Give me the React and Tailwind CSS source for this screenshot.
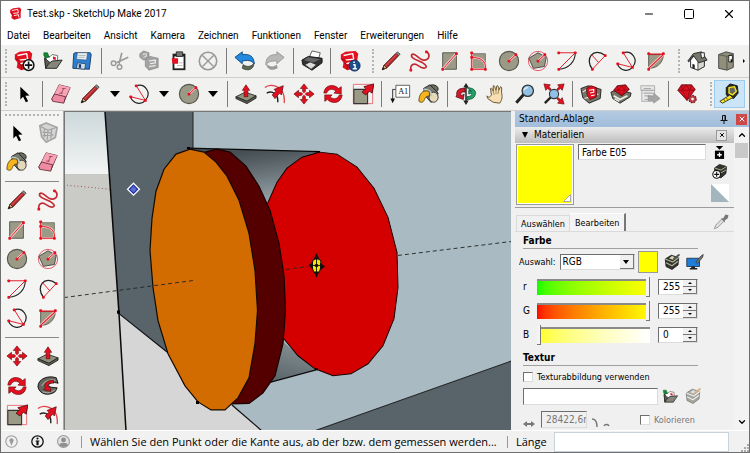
import React, { useState } from 'react';
import { Minus, Square, X, ChevronUp, ChevronDown } from 'lucide-react';
import clsx from 'clsx';

const RED = '#e3101f';
const OLIVE = '#9a9a86';

const Svg = ({ children, className = 'w-[22px] h-[22px]' }) => (
  <svg viewBox="0 0 24 24" className={clsx('shrink-0', className)} fill="none" strokeLinejoin="round">
    {children}
  </svg>
);

const Dots = ({ points }) =>
  points.map(([x, y]) => <rect key={`${x}-${y}`} x={x - 1.5} y={y - 1.5} width="3" height="3" rx="1" fill={RED} />);

/* ---------- file icons ---------- */

const LogoShape = () => (
  <>
    <path d="M2 5 L7 2 L18 1 L21 4 L20 10 L20 19 L9 22 L4 19 L5 14 L2 10 Z" fill={RED} />
    <path d="M5 6 L15 4 L16 10 L7 11 M8 15 L16 13 L17 18" stroke="#fff" strokeWidth="1.500" />
    <path d="M5 14 L9 16 V21 M3 10 L8 12" stroke="#8f0a14" strokeWidth="1" />
  </>
);

const NewIcon = () => (
  <Svg>
    <LogoShape />
    <circle cx="17" cy="16.500" r="5.800" fill="#fff" stroke="#111" strokeWidth="1.600" />
    <path d="M13 16.500h8M17 12.500v8" stroke="#111" strokeWidth="1.800" />
  </Svg>
);

const OpenIcon = ({ className }) => (
  <Svg className={className}>
    <path d="M4 8 L9 7 L11 5 L17 6 L17 12 L5 14 Z" fill="#fff" stroke="#444" strokeWidth=".8" />
    <path d="M12 7l3 1v3l-3-1z" fill={RED} />
    <path d="M2 3 L6 3 L8 8 L5 8 L4 10 L2 6 Z" fill="#138a2e" stroke="#0b4d1a" strokeWidth=".6" />
    <path d="M3 9 L4 20 L16 20 L22 11 L11 12 L9 14 Z" fill="#85857b" stroke="#222" strokeWidth="1" />
    <path d="M3 9 L4 20 L8 14" fill="#5c5c55" stroke="#222" strokeWidth="1" />
  </Svg>
);

const SaveIcon = () => (
  <Svg>
    <path d="M4 3 L21 3 L22 5 L20 21 L2 20 L3 4 Z" fill="#2f7fd0" stroke="#173a66" strokeWidth="1" />
    <path d="M7 3 L18 3 L17 11 L6 10 Z" fill="#eef0f0" stroke="#31506f" strokeWidth=".6" />
    <path d="M8 6h8M8 8h7" stroke="#9aa" strokeWidth=".8" />
    <path d="M7 14 L16 15 L15 21 L6 20 Z" fill="#d7dde2" stroke="#173a66" strokeWidth=".8" />
    <path d="M8.500 15.500h2.500v4h-2.500z" fill="#173a66" />
  </Svg>
);

const CutIcon = () => (
  <Svg>
    <path d="M14 3 L11 15 M21 8 L8 14" stroke="#9a9a9a" strokeWidth="1.800" />
    <circle cx="5" cy="14.500" r="2.500" stroke="#9a9a9a" strokeWidth="1.600" />
    <circle cx="11.500" cy="18.500" r="2.500" stroke="#9a9a9a" strokeWidth="1.600" />
  </Svg>
);

const CopyIcon = () => (
  <Svg>
    <path d="M2 4 L6 1 L12 3 L12 10 L6 11 L2 8 Z" fill="#a3a3a3" stroke="#888" strokeWidth=".8" />
    <path d="M5 5l4-1v3l-3 1" stroke="#eee" strokeWidth="1" />
    <path d="M8 10 L13 7 L22 9 L22 19 L12 22 L8 18 Z" fill="#a3a3a3" stroke="#888" strokeWidth=".8" />
    <path d="M12 12l7-1v3l-6 1M12 18l7-1" stroke="#eee" strokeWidth="1.200" />
  </Svg>
);

const PasteIcon = () => (
  <Svg>
    <path d="M5 4h14v18H5z" fill="#222" />
    <path d="M7 7h10v13H7z" fill="#fff" />
    <path d="M9 2h7v5H9z" fill="#777" stroke="#111" strokeWidth=".8" />
    <path d="M4 9h7v6H5z" fill={RED} />
    <path d="M12 14h4M10 17h6" stroke="#bbb" />
  </Svg>
);

const DeleteIcon = () => (
  <Svg>
    <circle cx="12" cy="12" r="9.500" stroke="#979797" strokeWidth="1.700" />
    <path d="M6 6 L18 18 M18 6 L6 18" stroke="#979797" strokeWidth="1.500" />
  </Svg>
);

const UndoIcon = () => (
  <Svg>
    <path d="M10 16 C16 20 20 17 22 14 L21 18 C18 23 13 22 9 20 Z" fill="#5d6a52" stroke="#222" strokeWidth=".7" />
    <path d="M1 8 L9 2 L9 5 C17 4 22 7 22 15 C19 11 15 11 9 12 L9 15 Z" fill="#2389df" stroke="#0e4a80" strokeWidth="1" />
  </Svg>
);

const RedoIcon = () => (
  <Svg>
    <path d="M14 16 C8 20 4 17 2 14 L3 18 C6 23 11 22 15 20 Z" fill="#9a9a9a" />
    <path d="M22 8 L14 2 L14 5 C6 5 2 8 2 16 C5 12 9 12 14 12 L14 15 Z" fill="#b8b8b8" stroke="#999" />
  </Svg>
);

const PrintIcon = () => (
  <Svg>
    <path d="M9 8 L12 1 L21 3 L19 10 Z" fill="#fff" stroke="#444" strokeWidth=".9" />
    <path d="M1 11 L8 7 L23 9 L23 14 L12 22 L2 16 Z" fill="#333" stroke="#111" />
    <path d="M3 11 L8 8 L21 10 L13 14 Z" fill="#686868" />
    <path d="M4 16 L10 13 L17 16 L11 21 Z" fill="#ddd" stroke="#222" strokeWidth=".8" />
  </Svg>
);

const InfoIcon = () => (
  <Svg>
    <LogoShape />
    <circle cx="17" cy="17" r="6" fill="#1b4f8c" stroke="#0d2c55" />
    <path d="M15.500 16h2v4.500M15 20.500h4.500M16.500 12.500v1.800" stroke="#fff" strokeWidth="1.600" />
  </Svg>
);

/* ---------- drawing icons ---------- */

const PencilIcon = () => (
  <Svg>
    <path d="M2.500 21.500 L4.500 16.500 L17.500 3.500 L20.500 6 L7.500 19.500 Z" fill="#c1282d" stroke="#41110f" strokeWidth="1" />
    <path d="M17.500 3.500 L19 2 L22 4.500 L20.500 6" fill="#8d8d8d" stroke="#333" strokeWidth=".8" />
    <path d="M6 17.500 L18 5" stroke="#e46b68" strokeWidth=".8" />
    <path d="M2.500 21.500 L4.500 16.500 L7.500 19.500 Z" fill="#d8b384" stroke="#2e1e10" strokeWidth=".8" />
    <path d="M2.500 21.500 L3.700 18.800 L5.200 20.200 Z" fill="#111" />
  </Svg>
);

const FreehandIcon = () => (
  <Svg>
    <path
      d="M2 22 C1 15 6 14 10 17 C17 22 23 19 15 14 C9 11 1 9 3 5 C7 2 11 12 17 11 C23 10 23 4 19 2"
      stroke="#c22a31"
      strokeWidth="1.800"
    />
    <Dots points={[[2, 22], [19, 2]]} />
  </Svg>
);

const RectIcon = () => (
  <Svg>
    <path d="M4 3h15v18H4z" fill={OLIVE} stroke="#55554a" />
    <path d="M4 21 L19 4" stroke="#fbd0cf" strokeWidth="2.800" />
    <path d="M4 21 L19 4" stroke={RED} strokeWidth="1" />
    <Dots points={[[4, 21], [19, 4]]} />
  </Svg>
);

const RotRectIcon = () => (
  <Svg>
    <path d="M4 4h15v17H4z" fill={OLIVE} stroke="#66665a" strokeWidth=".8" />
    <path d="M4 3v18h15v-4C18 11 12 8 4 8" stroke="#fbc4c4" strokeWidth="2.400" />
    <path d="M4 3v18h15v-4C18 11 12 8 4 8" stroke={RED} strokeWidth="1" />
    <Dots points={[[4, 3], [4, 8], [4, 21], [19, 21]]} />
  </Svg>
);

const CircleIcon = () => (
  <Svg>
    <circle cx="12" cy="12" r="10.500" fill={OLIVE} stroke="#55554a" strokeWidth="1.200" />
    <path d="M12 12 L19.500 5" stroke="#fbc4c4" strokeWidth="2.600" />
    <path d="M12 12 L19.500 5" stroke={RED} strokeWidth="1" />
    <Dots points={[[12, 12], [19.500, 5]]} />
  </Svg>
);

const PolygonIcon = () => (
  <Svg>
    <circle cx="12" cy="12" r="10.500" stroke="#e4505a" strokeWidth="1" />
    <path d="M2 9 L12 3 L21 8 L19 18 L7 20 Z" fill={OLIVE} stroke="#444" strokeWidth="1" />
    <path d="M12 12 L19.500 5" stroke="#fbc4c4" strokeWidth="2.600" />
    <path d="M12 12 L19.500 5" stroke={RED} strokeWidth="1" />
    <Dots points={[[12, 12], [19.500, 5]]} />
  </Svg>
);

const ArcIcon = () => (
  <Svg>
    <path d="M21 3 C21 13 14 20 3 21" stroke="#222" strokeWidth="1.200" />
    <path d="M3 3 H21 L3 21" stroke={RED} strokeWidth="1" />
    <Dots points={[[3, 3], [21, 3], [3, 21]]} />
  </Svg>
);

const Arc2Icon = () => (
  <Svg>
    <path d="M7 21 C-2 10 8 -4 21 6" stroke="#222" strokeWidth="1.400" />
    <path d="M7 21 L21 6 M6 5 L14 14" stroke={RED} strokeWidth="1" />
    <Dots points={[[7, 21], [21, 6]]} />
  </Svg>
);

const Arc3Icon = () => (
  <Svg>
    <path d="M9 3 C19 0 26 11 19 19 C14 25 6 22 3 16" stroke="#222" strokeWidth="1.300" />
    <path d="M9 3 L19 19 L3 15" stroke={RED} strokeWidth="1" />
    <Dots points={[[9, 3], [19, 19], [3, 15]]} />
  </Svg>
);

const PieIcon = () => (
  <Svg>
    <path d="M4 5h16C20 12 15 20 4 20z" fill={OLIVE} stroke="#55554a" />
    <path d="M4 20 L20 5" stroke="#fbc4c4" strokeWidth="3" />
    <path d="M20 4.500 H4 M4 20 L20 5" stroke={RED} strokeWidth="1.100" />
    <Dots points={[[4, 4], [20, 4], [4, 21]]} />
  </Svg>
);

const HouseIcon = () => (
  <Svg>
    <path d="M5 11 L5 19 L13 22 L20 18 L20 10 L9 6 Z" fill="#fff" stroke="#222" />
    <path d="M13 22 V13 L20 10 V18 Z" fill="#d8d8d2" stroke="#222" strokeWidth=".8" />
    <path d="M7 20 V15 L9.500 16 V21" fill="#222" />
    <path d="M2 12 L8 4 L17 2 L23 11 L14 14 L8 6 L3 13 Z" fill="#77776b" stroke="#222" />
    <path d="M16 3h4v5l-3 1z" fill="#fff" stroke="#222" />
  </Svg>
);

const BoxIcon = () => (
  <Svg>
    <path d="M4 5 L12 2 L20 4 L20 19 L13 22 L4 20 Z" fill="#8f8f7c" stroke="#444" />
    <path d="M4 5 L13 7 L20 4 M13 7 V22" stroke="#55554a" />
    <path d="M15 6h4v7h-4z" fill="#fff" stroke="#111" strokeWidth=".9" />
    <path d="M17 10h1.500v3H17z" fill="#111" />
  </Svg>
);

/* ---------- edit icons ---------- */

const SelectIcon = () => (
  <Svg>
    <path d="M8 4 L8 18 L11 15 L14 21 L16.500 20 L13.500 14 L18 13.500 Z" fill="#000" />
  </Svg>
);

const EraserIcon = () => (
  <Svg>
    <path d="M10 2 L22 5 L15 21 L2 18 Z" fill="#f08ca3" stroke="#5d2733" strokeWidth="1" />
    <path d="M10 2 L22 5 L17 15 L5 12 Z" fill="#f7a3b6" />
    <path d="M2 17 L5 12 L17 15 L15 22 L3 20 Z" fill="#ee8ba2" stroke="#5d2733" strokeWidth=".9" />
    <path d="M15 6 L12 12 M13 6h4M10 11h4" stroke="#a6485c" strokeWidth="1" />
  </Svg>
);

const MakeIcon = () => (
  <Svg>
    <path d="M3 4 L10 1 L22 6 L20 17 L10 22 L5 16 Z" fill="#d5d5d5" stroke="#a5a5a5" strokeWidth="1.800" />
    <path d="M4 5 L12 9 L21 6 M12 9 L11 20 M8 8 L8 17 M6 11 L16 12 M16 8 L15 18 M6 15 L18 14" stroke="#9f9f9f" strokeWidth="1.200" />
  </Svg>
);

const PaintIcon = () => (
  <Svg>
    <ellipse cx="16" cy="6.500" rx="6" ry="4.500" fill="#6b6b60" stroke="#222" />
    <path d="M6 6 L13 2 L22 11 L20 18 L14 21 L8 14 Z" fill="#777b70" stroke="#222" />
    <ellipse cx="17" cy="15.500" rx="5" ry="5.500" fill="#e5d9b8" stroke="#333" />
    <path d="M6 7 C13 7 14 10 15 14" stroke="#bfc7cf" strokeWidth="2" />
    <path d="M12 9 C5 7 1 12 1 20 C4 22 6 21 7 18 C8 15 10 14 13 14 Z" fill="#f6b51c" stroke="#51420c" strokeWidth=".9" />
  </Svg>
);

const PushPullIcon = () => (
  <Svg>
    <path d="M1 15 L11 10 L23 14 L13 20 Z" fill="#8e927d" stroke="#222" strokeWidth=".9" />
    <path d="M1 15 V17 L13 22.500 L23 16.500 V14 L13 20 Z" fill="#5c6050" stroke="#222" strokeWidth=".9" />
    <path d="M10 15 V8 H8 L12 2 L16 8 H14 V15 Z" fill={RED} stroke="#6a0a10" strokeWidth=".7" />
  </Svg>
);

const OffsetIcon = () => (
  <Svg>
    <path d="M1 5 C8 -1 24 4 22 22" stroke="#e2434b" strokeWidth="1.400" />
    <path d="M3 11 C9 8 16 12 15 21" stroke="#222" strokeWidth="1.600" />
    <path d="M9 13 L13 9 L11 7 L21 3 L19 13 L17 11 L12 17 Z" fill={RED} stroke="#5d0a10" strokeWidth=".8" />
  </Svg>
);

const MoveIcon = () => (
  <Svg>
    <path
      d="M12 1 L16 6 H13.500 V10.500 H18 V8 L23 12 L18 16 V13.500 H13.500 V18 H16 L12 23 L8 18 H10.500 V13.500 H6 V16 L1 12 L6 8 V10.500 H10.500 V6 H8 Z"
      fill={RED}
      stroke="#6a0a10"
      strokeWidth=".7"
    />
    <path d="M8.500 8.500 L15.500 15.500 M15.500 8.500 L8.500 15.500" stroke="#f3f3f3" strokeWidth="1.200" />
  </Svg>
);

const RotateIcon = () => (
  <Svg>
    <path d="M2 11 C3 1 14 1 18 6 L21 4 L21 12 L13 11 L15 9 C11 5 7 7 5 11 Z" fill={RED} stroke="#6a0a10" strokeWidth=".7" />
    <path d="M22 13 C21 23 10 23 6 18 L3 20 L3 13 L11 13 L9 15 C13 19 17 17 19 13 Z" fill={RED} stroke="#6a0a10" strokeWidth=".7" />
  </Svg>
);

const ScaleIcon = () => (
  <Svg>
    <path d="M1.500 1.500h21v21h-21z" stroke="#ea6a72" strokeWidth="1" />
    <path d="M2 7h15v15.500H2z" fill={OLIVE} stroke="#333" strokeWidth="1.200" />
    <path d="M11 10 L15 6 L13 4 L24 1 L22 11 L19 9 L15 13 Z" fill={RED} stroke="#4d070b" strokeWidth=".9" />
  </Svg>
);

const FollowMeIcon = () => (
  <Svg>
    <path d="M1 13 C1 4 12 0 21 3 L23 9 C17 7 12 9 12 13 L22 14 L20 18 C14 23 3 22 1 13 Z" fill="#66665e" stroke="#111" />
    <path d="M5 12 C8 6 15 4 20 6 M6 18 C9 20 15 20 20 16" stroke="#aaa89a" strokeWidth="1.200" />
    <path d="M18 6 C11 5 7 10 9 15 L7 16 L15 18 L14 12 L12 13 C11 10 14 8 18 9 Z" fill={RED} stroke="#5d0a10" strokeWidth=".7" />
  </Svg>
);

const TextIcon = () => (
  <Svg>
    <path d="M7.500 2.500h15v13h-15z" fill="#fff" stroke="#444" strokeWidth=".9" />
    <text x="10" y="12.500" fontSize="9" fontFamily="Liberation Serif, serif" fill="#111">A1</text>
    <path d="M7 7 H4 V18" stroke="#111" strokeWidth=".9" />
    <path d="M1.500 17h5L4 22z" fill="#111" />
  </Svg>
);

/* ---------- camera and warehouse icons ---------- */

const OrbitIcon = () => (
  <Svg>
    <path d="M12 0 L15 5 H9 Z M12 24 L9 19 H15 Z" fill="#222" />
    <path d="M12 4 V20" stroke="#222" strokeWidth="1.600" />
    <path d="M11 6 C4 5 1 9 2 13 L1 15 L9 18 L10 12 L7 14 C5 11 8 9 11 10 Z" fill="#cf1b2b" stroke="#4d070b" strokeWidth=".8" />
    <path d="M13 5 C20 5 24 9 22 13 C21 17 17 18 13 18 L13 15 C17 15 19 13 18 11 L15 12 L15 8 L18 9 Z" fill="#22a268" stroke="#0b4a2d" strokeWidth=".8" />
  </Svg>
);

const PanIcon = () => (
  <Svg>
    <path
      d="M2 14 C4 16 5 16 7 13 L6 6 C8 4 8 9 9 9 L9 3 C11 2 11 7 12 8 L13 3 C15 2 15 8 15 8 L17 4 C19 4 18 9 18 10 C19 15 19 18 16 22 L9 21 L3 17 Z"
      fill="#f8dfb3"
      stroke="#5c4a28"
      strokeWidth="1"
    />
    <path d="M9 9l1 4M12 8v4M15 8l-1 4" stroke="#8a7142" strokeWidth=".8" />
  </Svg>
);

const ZoomIcon = () => (
  <Svg>
    <path d="M11 12 L2.500 21.500" stroke="#222" strokeWidth="3.200" />
    <circle cx="15" cy="8.500" r="6.200" fill="#8fc0e6" stroke="#333" strokeWidth="1.400" />
    <path d="M11 8 C11 6 13 5 15 5" stroke="#e9f5ff" strokeWidth="1.200" />
  </Svg>
);

const ZoomExtentsIcon = () => (
  <Svg>
    <path
      d="M1 1 L8 2 L6.500 4 L9 7 L7.500 8 L5 6 L3 8 Z M23 1 L16 2 L17.500 4 L15 7 L16.500 8 L19 6 L21 8 Z M23 23 L16 22 L17.500 20 L15 17 L16.500 16 L19 18 L21 16 Z"
      fill={RED}
      stroke="#6a0a10"
      strokeWidth=".7"
    />
    <path d="M9 15 L2 22" stroke="#222" strokeWidth="2.600" />
    <circle cx="12" cy="12" r="5" fill="#8fc0e6" stroke="#333" strokeWidth="1.200" />
  </Svg>
);

const WarehouseIcon = () => (
  <Svg>
    <path d="M1 6 L9 3 L23 7 L22 17 L10 22 L3 16 Z" fill="#75756a" stroke="#222" />
    <path d="M3 10 L9 6 L9 17 M5 17 L20 12" stroke="#e8e8e0" strokeWidth="1.200" />
    <path d="M7 6 L12 3 L18 5 L18 15 L11 18 L8 14 Z" fill={RED} stroke="#4d070b" strokeWidth=".8" />
    <path d="M10 8l5-1v3l-4 1M12 14l4-1" stroke="#fff" strokeWidth="1.200" />
  </Svg>
);

const ExtensionIcon = () => (
  <Svg>
    <path d="M1 10 L8 7 L23 11 L22 15 L11 22 L3 17 Z" fill="#75756a" stroke="#222" />
    <path d="M4 14 L11 18 L19 14 M5 17l5 3" stroke="#f0f0ea" strokeWidth="1.800" />
    <path d="M4 8 L8 3 L17 2 L21 7 L13 14 Z" fill={RED} stroke="#4d070b" strokeWidth=".9" />
    <path d="M4 8 L13 8 L21 7 M9 8 L13 14 L16 8 M8 3 L9 8 L13 3 L16 8 L17 2" stroke="#8c0812" strokeWidth=".7" />
  </Svg>
);

const SendIcon = () => (
  <Svg>
    <path d="M2 3h15v5H2zM3 8h14v12H3z" fill="#e8e8e8" stroke="#aaa" strokeWidth="1" />
    <path d="M5 11h10M5 6h8M6 14h6M6 18h5" stroke="#aaa" strokeWidth="1.200" />
    <path d="M10 14h6v-3l7 6-7 5v-3h-6z" fill="#a6a6a6" stroke="#888" strokeWidth=".6" />
  </Svg>
);

const RubyIcon = () => (
  <Svg>
    <path d="M2 8 L6 2 L17 2 L21 7 L12 19 Z" fill="#d8101f" stroke="#5d0a10" strokeWidth=".9" />
    <path d="M2 8 H20 M7 8 L12 19 L15 8 L11 2 L7 8 L6 2 M15 8 L17 2" stroke="#8c0812" strokeWidth=".8" />
    <circle cx="18" cy="17.500" r="4" fill="#b8404a" stroke="#7d1a22" strokeWidth="1.400" strokeDasharray="2 1" />
    <circle cx="18" cy="17.500" r="1.500" fill="#f0f0f0" />
  </Svg>
);

const TapeIcon = () => (
  <Svg>
    <path d="M9 5 L13 1 L21 3 L22 11 L17 17 L9 13 Z" fill="#2a2a24" stroke="#111" />
    <path d="M12 5 L18 4 L20 9 L16 13 L12 11 Z" fill="#66665a" stroke="#f5e51c" strokeWidth="1.500" />
    <path d="M13 13 L16 16 L5 22 L2 20 Z" fill="#f5e51c" stroke="#222" strokeWidth=".9" />
    <path d="M6 17.500l1.500 2M9 16l1.500 2" stroke="#222" strokeWidth=".8" />
  </Svg>
);

/* ---------- toolbars ---------- */

const fileTools = [
  ['Neu', NewIcon], ['Öffnen', OpenIcon], ['Speichern', SaveIcon], '|',
  ['Ausschneiden', CutIcon], ['Kopieren', CopyIcon], ['Einfügen', PasteIcon], ['Löschen', DeleteIcon], '|',
  ['Rückgängig', UndoIcon], ['Wiederholen', RedoIcon], '|',
  ['Drucken', PrintIcon], '|',
  ['Modellinformationen', InfoIcon], '||',
  ['Linie', PencilIcon], ['Freihand', FreehandIcon], ['Rechteck', RectIcon], ['Gedrehtes Rechteck', RotRectIcon],
  ['Kreis', CircleIcon], ['Polygon', PolygonIcon], ['Bogen', ArcIcon], ['2-Punkt-Bogen', Arc2Icon],
  ['3-Punkt-Bogen', Arc3Icon], ['Kreissegment', PieIcon], '||',
  ['Iso', HouseIcon], ['Oben', BoxIcon], '>',
];

const editTools = [
  ['Auswählen', SelectIcon], '|',
  ['Radiergummi', EraserIcon], ['Linie', PencilIcon], 'v', ['Bogen', Arc3Icon], 'v', ['Kreis', CircleIcon], 'v', '|',
  ['Drücken/Ziehen', PushPullIcon], ['Versatz', OffsetIcon], ['Verschieben', MoveIcon], ['Drehen', RotateIcon],
  ['Skalieren', ScaleIcon], '|',
  ['Text', TextIcon], ['Farbeimer', PaintIcon], '|',
  ['Rotieren', OrbitIcon], ['Schwenken', PanIcon], ['Zoomen', ZoomIcon], ['Alles zeigen', ZoomExtentsIcon], '|',
  ['3D Warehouse', WarehouseIcon], ['Extension Warehouse', ExtensionIcon], ['Senden', SendIcon], '|',
  ['Erweiterungs-Manager', RubyIcon], '||',
  ['Maßband', TapeIcon, true],
];

const sideTools = [
  [['Auswählen', SelectIcon], ['Komponente', MakeIcon], ['Farbeimer', PaintIcon], ['Radiergummi', EraserIcon]],
  [
    ['Linie', PencilIcon], ['Freihand', FreehandIcon], ['Rechteck', RectIcon], ['Gedrehtes Rechteck', RotRectIcon],
    ['Kreis', CircleIcon], ['Polygon', PolygonIcon], ['Bogen', ArcIcon], ['2-Punkt-Bogen', Arc2Icon],
    ['3-Punkt-Bogen', Arc3Icon], ['Kreissegment', PieIcon],
  ],
  [
    ['Verschieben', MoveIcon], ['Drücken/Ziehen', PushPullIcon], ['Drehen', RotateIcon], ['Folge mir', FollowMeIcon],
    ['Skalieren', ScaleIcon], ['Versatz', OffsetIcon],
  ],
];

const Grip = () => <span className="w-1 self-stretch my-1 border-l-2 border-dotted border-[#b4b4b4] shrink-0" />;

const ToolButton = ({ label, icon: Icon, active }) => (
  <button
    aria-label={label}
    className={clsx(
      'flex-1 min-w-0 h-7 flex items-center justify-center',
      active ? 'bg-[#cce4f7] border border-[#9ccbee]' : 'hover:bg-[#e2eef8]'
    )}
  >
    <Icon />
  </button>
);

const Toolbar = ({ tools }) => (
  <div className="flex items-center h-[33px] px-1 bg-[#f1f1f0] border-b border-[#cfcfcf] shrink-0">
    <Grip />
    {tools.map((t, i) => {
      if (t === '|') {
        return (
          <span key={i} className="w-2 flex justify-center shrink-0">
            <span className="w-px h-[26px] bg-[#7d7d7d]" />
          </span>
        );
      }
      if (t === '||') {
        return (
          <span key={i} className="w-3 pl-1 flex gap-1 self-stretch shrink-0">
            <span className="w-px bg-[#c0c0c0]" />
            <Grip />
          </span>
        );
      }
      if (t === 'v') {
        return (
          <button key={i} aria-label="Weitere Werkzeuge" className="w-5 h-7 flex items-center justify-center shrink-0">
            <svg viewBox="0 0 10 6" className="w-[10px] h-[6px]"><path d="M0 0h10L5 6z" fill="#000" /></svg>
          </button>
        );
      }
      if (t === '>') {
        return (
          <button key={i} aria-label="Mehr anzeigen" className="w-1 h-7 flex items-center justify-end shrink-0">
            <svg viewBox="0 0 2 4" className="w-[2px] h-1"><path d="M0 0l2 2-2 2z" fill="#000" /></svg>
          </button>
        );
      }
      return <ToolButton key={i} label={t[0]} icon={t[1]} active={t[2]} />;
    })}
  </div>
);

const SidePalette = () => (
  <aside className="w-[63px] shrink-0 flex flex-col bg-[#f4f4f3] border-r border-[#a9a9a9]">
    <div className="mx-1 mt-[3px] h-1 border-t-2 border-dotted border-[#b4b4b4] shrink-0" />
    {sideTools.map((group, g) => (
      <React.Fragment key={g}>
        {g > 0 && (
          <div className="h-2 flex items-center px-1 shrink-0">
            <span className="w-full h-px bg-[#8a8a8a]" />
          </div>
        )}
        {Array.from({ length: group.length / 2 }, (_, r) => (
          <div key={r} className="flex flex-1 min-h-0 items-center">
            {group.slice(r * 2, r * 2 + 2).map(([label, Icon]) => (
              <ToolButton key={label} label={label} icon={Icon} />
            ))}
          </div>
        ))}
      </React.Fragment>
    ))}
  </aside>
);

/* ---------- model view ---------- */

const Viewport = () => (
  <main className="flex-1 min-w-0 min-h-0 overflow-hidden border-t border-l border-[#777]">
    <svg viewBox="65 112 446 317" preserveAspectRatio="none" className="block w-full h-full">
      <defs>
        <linearGradient id="sky" x1="0" y1="0" x2="0" y2="1">
          <stop offset="0" stopColor="#cdd8db" />
          <stop offset="1" stopColor="#f3f5f4" />
        </linearGradient>
        <linearGradient id="topShade" gradientUnits="userSpaceOnUse" x1="258" y1="150" x2="266" y2="204">
          <stop offset="0" stopColor="#464f53" />
          <stop offset=".35" stopColor="#626c71" />
          <stop offset="1" stopColor="#9aa8ae" />
        </linearGradient>
        <linearGradient id="bottomShade" gradientUnits="userSpaceOnUse" x1="288" y1="338" x2="278" y2="380">
          <stop offset="0" stopColor="#879297" />
          <stop offset="1" stopColor="#5b666b" />
        </linearGradient>
      </defs>

      <rect x="64" y="112" width="448" height="318" fill="#a9bac2" />
      <rect x="64" y="112" width="50" height="62" fill="url(#sky)" />
      <path d="M64 174 H110 L126 430 H64 Z" fill="#cacbc6" />
      <path d="M105 112 H193 V300 L168 352 L119 313 Z" fill="#59636a" />
      <path d="M119 313 L168 352 L262 430 H126 Z" fill="#d6d6d6" />
      <path d="M314 430 L512 360 V430 Z" fill="#59636a" />
      <path d="M314 430 L512 360 M193 112 V150" stroke="#222" />
      <path d="M105 112 L119 313 L126 430" stroke="#0a0a0a" strokeWidth="1.500" fill="none" />
      <path d="M119 313 L168 352 M232 404 L262 430" stroke="#111" strokeWidth="1.200" />
      <path d="M67 185 L110 189" stroke="#a24e55" strokeDasharray="1 2.500" />

      {/* cylinder behind the discs */}
      <path d="M188 148 L320 151.500 L268 210 L230 180 Z" fill="url(#topShade)" />
      <path d="M270 330 L316 369 L268 382 Z" fill="url(#bottomShade)" />
      <path d="M188 148 L320 151.500 M268 382 L316 369" stroke="#0a0a0a" strokeWidth="1.400" />
      <path
        d="M320 152 L337 154 L357 167 L374 188 L388 217 L397 252 L398 287 L394 318 L383 345 L368 363 L351 373 L333 375 L315 368 L298 355 L283 337 L270 310 L262 270 L262 230 L268 202 L277 182 L287 168 L302 157 Z"
        fill="#d40000"
        stroke="#170000"
      />
      <path
        d="M205 152 L217 149 L230 152 L246 166 L259 186 L270 210 L279 243 L284 275 L285.500 310 L283 343 L275 375 L263 392 L249 402.500 L232 403 Z"
        fill="#540000"
        stroke="#170000"
        strokeWidth="1.200"
      />
      <path
        d="M190 149 L204 152 L216 162 L227 176 L239 200 L249 233 L255 270 L257.500 310 L255 343 L249 377 L238 397 L225 409 L211 409 L198 401 L185 385 L168 353 L158 320 L153 287 L150 250 L152 218 L156 191 L164 169 L176 154 Z"
        fill="#d36c00"
        stroke="#140a00"
        strokeWidth="1.200"
      />
      <path d="M64 297 L193 280 M286 269 L308 266 M398 255 L512 241" stroke="#222" strokeWidth=".9" strokeDasharray="4 3" />

      <path d="M133.500 183 L139.500 189 L133.500 195 L127.500 189 Z" fill="#5b6bd2" stroke="#fff" strokeWidth="1.200" />
      <path d="M133.500 185 L137.500 189 L133.500 193 L129.500 189 Z" fill="none" stroke="#1f2c9a" />

      <path d="M316.500 257 L320.500 260 L321.500 265 L319.500 271 L316.500 274 L313.500 271 L311.500 265 L313 260 Z" fill="#f2e500" stroke="#111" strokeWidth="1" />
      <path d="M316.500 252.500 L319.500 259 H313.500 Z M316.500 277.500 L314 271 H319 Z M308.500 265 L313 261 V269 Z M325 266 L320 262 V270 Z" fill="#111" />
      <path d="M316.500 258 V272 M313 265 H320" stroke="#111" strokeWidth=".9" />
      <circle cx="316.500" cy="265" r="1.800" fill="#111" />
      <path d="M117 310h3v3h-3zM187 147h3v2h-3zM315 367.500h3v2h-3zM196 400h3v3h-3zM315 151h5v1h-5z" fill="#000" />
    </svg>
  </main>
);

/* ---------- tray ---------- */

const sunken = 'bg-white border border-t-[#6e6e6e] border-l-[#6e6e6e] border-b-[#dcdcdc] border-r-[#dcdcdc] outline-none';

const channels = [
  {
    id: 'r', max: 255,
    track: '[&::-webkit-slider-runnable-track]:bg-linear-to-r [&::-webkit-slider-runnable-track]:from-[#00ff00] [&::-webkit-slider-runnable-track]:to-[#ffff00]',
  },
  {
    id: 'G', max: 255,
    track: '[&::-webkit-slider-runnable-track]:bg-linear-to-r [&::-webkit-slider-runnable-track]:from-[#ff0000] [&::-webkit-slider-runnable-track]:to-[#ffff00]',
  },
  {
    id: 'B', max: 255,
    track: '[&::-webkit-slider-runnable-track]:bg-linear-to-r [&::-webkit-slider-runnable-track]:from-[#ffff00] [&::-webkit-slider-runnable-track]:to-[#ffffff]',
  },
];

const sliderBase =
  'flex-1 min-w-0 h-5 appearance-none bg-transparent ' +
  '[&::-webkit-slider-runnable-track]:h-[16px] [&::-webkit-slider-runnable-track]:border-t-2 [&::-webkit-slider-runnable-track]:border-[#8a8a8a] ' +
  '[&::-webkit-slider-thumb]:appearance-none [&::-webkit-slider-thumb]:w-[4px] [&::-webkit-slider-thumb]:h-[20px] [&::-webkit-slider-thumb]:-mt-1 ' +
  '[&::-webkit-slider-thumb]:bg-[#f4f4f4] [&::-webkit-slider-thumb]:border-r [&::-webkit-slider-thumb]:border-b [&::-webkit-slider-thumb]:border-[#777]';

const Spinner = () => (
  <span className="w-[14px] flex flex-col shrink-0">
    {['+', '-'].map((d) => (
      <button
        key={d}
        aria-label={d === '+' ? 'Erhöhen' : 'Verringern'}
        className="flex-1 min-h-0 bg-[#f0f0f0] border-r border-b border-[#777] flex items-center justify-center"
      >
        <svg viewBox="0 0 4 2" className="w-1 h-[2px]">
          <path d={d === '+' ? 'M0 2L2 0l2 2z' : 'M0 0h4L2 2z'} fill="#000" />
        </svg>
      </button>
    ))}
  </span>
);

const ChannelRow = ({ channel, value, onChange }) => (
  <div className="flex items-center h-6">
    <label htmlFor={`ch-${channel.id}`} className="w-[14px] shrink-0 text-[10px]">{channel.id}</label>
    <input
      id={`ch-${channel.id}`}
      type="range"
      min="0"
      max={channel.max}
      value={value}
      onChange={(e) => onChange(Number(e.target.value))}
      className={clsx(sliderBase, channel.track)}
    />
    <span className={clsx('ml-2 w-10 h-4 flex shrink-0', sunken)}>
      <input
        aria-label={`Wert ${channel.id}`}
        value={value}
        onChange={(e) => onChange(Number(e.target.value) || 0)}
        className="flex-1 min-w-0 pl-1 bg-transparent outline-none text-[10px] leading-[14px]"
      />
      <Spinner />
    </span>
  </div>
);

const BoxGlyph = ({ muted }) => (
  <Svg className="w-[18px] h-[18px]">
    <path d="M3 8 L11 3 L21 6 L20 16 L12 22 L4 18 Z" fill={muted ? '#a5a59c' : '#34342c'} stroke={muted ? '#777' : '#111'} />
    <path d="M3 8 L13 12 L21 6 M4 13 L12 17 L20 11" stroke={muted ? '#eee' : '#b6b69c'} strokeWidth="1.400" />
    <path d="M8 7l5 2 4-3-5-2z" fill={muted ? '#ddd' : '#d9d9b8'} />
    <path d="M14 8 L22 2" stroke={muted ? '#d9b48a' : '#555'} strokeWidth="2.500" />
  </Svg>
);

const PickerGlyph = () => (
  <Svg className="w-[18px] h-[18px]">
    <path d="M3 21 L5 16 L13 8 L16 11 L8 19 Z" fill="#ddd" stroke="#888" />
    <path d="M12 7 L15 7 L18 2 L22 3 L21 7 L17 10 L17 13 Z" fill="#777" />
  </Svg>
);

const Heading = ({ children }) => (
  <h3 className="font-bold text-[10px] leading-[14px] border-b border-[#a0a0a0]">{children}</h3>
);

const Tray = () => {
  const [rgb, setRgb] = useState([255, 255, 0]);
  const [name, setName] = useState('Farbe E05');
  const color = `rgb(${rgb.join(',')})`;

  return (
    <section className="w-[238px] shrink-0 min-h-0 flex flex-col pl-1 bg-[#f0f0f0] font-['DejaVu_Sans_Condensed','DejaVu_Sans',sans-serif] text-[9px]">
      <header className="h-4 pl-1 pr-[2px] flex items-center shrink-0 bg-linear-to-b from-[#b4cae2] to-[#a0bddb]">
        <h2 className="flex-1 text-[10px]">Standard-Ablage</h2>
        <button aria-label="Anheften" className="mr-2">
          <svg viewBox="0 0 8 9" className="w-2 h-[9px]" fill="none" stroke="#111">
            <path d="M2.500 5V.5h3V5M.5 5.500h7M4 6v3" />
            <path d="M5 1v4" />
          </svg>
        </button>
        <button aria-label="Schließen" className="w-[11px] h-[11px] bg-[#cf4848] text-white flex items-center justify-center">
          <X size={8} strokeWidth={3} />
        </button>
      </header>

      <div className="flex flex-1 min-h-0">
        <div className="flex-1 min-w-0 overflow-hidden">
          <div className="h-4 px-[7px] flex items-center bg-linear-to-b from-[#ececec] to-[#bdbdbd]">
            <svg viewBox="0 0 6 6" className="w-[6px] h-[6px] mr-[6px]"><path d="M0 0h6L3 6z" fill="#000" /></svg>
            <h3 className="flex-1 text-[10px]">Materialien</h3>
            <button aria-label="Materialien schließen" className="w-[11px] h-[11px] border border-[#999] bg-[#e4e4e4] flex items-center justify-center">
              <X size={6} strokeWidth={4} />
            </button>
          </div>

          <div className="flex px-px pt-px pb-[2px] border-b border-[#9c9c9c]">
            <div className="w-[58px] h-[61px] border border-[#999] shadow-[inset_0_0_0_1px_#fff] flex items-end justify-end p-[2px] shrink-0" style={{ backgroundColor: color }}>
              <svg viewBox="0 0 8 8" className="w-2 h-2"><path d="M7.500 0.500v7h-7z" fill="#fff" stroke="#aaa" /></svg>
            </div>
            <input
              aria-label="Materialname"
              value={name}
              onChange={(e) => setName(e.target.value)}
              className={clsx('ml-1 flex-1 min-w-0 h-4 px-[3px] text-[10px]', sunken)}
            />
            <div className="w-[27px] pt-[2px] flex flex-col items-center gap-1 shrink-0">
              <button aria-label="Sekundäre Auswahl">
                <svg viewBox="0 0 12 14" className="w-[11px] h-[13px]">
                  <path d="M2 0h8L6 4z" fill="#000" />
                  <path d="M1 5h10v9H1z" fill="#000" />
                  <path d="M6 7v5M3.500 9.500h5" stroke="#fff" strokeWidth="1.500" />
                </svg>
              </button>
              <button aria-label="Material erstellen">
                <Svg className="w-[17px] h-[17px]">
                  <path d="M5 7 L12 2 L22 5 L21 15 L14 21 L5 17 Z" fill="#34342c" stroke="#111" />
                  <path d="M5 7 L14 10 L22 5 M14 14 L21 10" stroke="#b6b69c" strokeWidth="1.300" />
                  <circle cx="8" cy="16" r="5.500" fill="#fff" stroke="#111" strokeWidth="1.500" />
                  <path d="M4.500 16h7M8 12.500v7" stroke="#111" strokeWidth="1.600" />
                </Svg>
              </button>
              <button aria-label="Standardmaterial">
                <svg viewBox="0 0 18 18" className="w-[18px] h-[18px]">
                  <path d="M0 0h18v18z" fill="#fff" />
                  <path d="M0 0v18h18z" fill="#a3b5bd" />
                </svg>
              </button>
            </div>
          </div>

          <div className="flex items-end pl-px pr-1 h-[23px]">
            <button className="h-4 px-1 border border-b-0 border-[#dadada]">Auswählen</button>
            <button className="h-[18px] px-[5px] border-r-2 border-t border-r-[#777] border-t-white bg-[#f4f4f4]">Bearbeiten</button>
            <span className="flex-1" />
            <button aria-label="Farbe aufnehmen"><PickerGlyph /></button>
          </div>

          <div className="pl-2 pr-9 pt-[2px] border-t border-[#dadada]">
            <Heading>Farbe</Heading>
            <div className="flex items-center h-[26px] -ml-1 -mr-4">
              <label htmlFor="color-mode">Auswahl:</label>
              <span className="relative ml-1 w-[75px]">
                <select
                  id="color-mode"
                  defaultValue="RGB"
                  className={clsx('block w-full h-4 pl-[2px] text-[10px] leading-[14px] appearance-none', sunken)}
                >
                  <option>RGB</option>
                  <option>HSB</option>
                </select>
                <span className="absolute right-[1px] top-[1px] w-[14px] h-[14px] bg-[#f0f0f0] border-r border-b border-[#777] flex items-center justify-center pointer-events-none">
                  <svg viewBox="0 0 6 4" className="w-[6px] h-1"><path d="M0 0h6L3 4z" fill="#000" /></svg>
                </span>
              </span>
              <span className="ml-[3px] w-5 h-[22px] border border-[#999]" style={{ backgroundColor: color }} />
              <button aria-label="Farbe von Objekt" className="ml-[5px]"><BoxGlyph /></button>
              <button aria-label="Farbe vom Bildschirm" className="ml-[5px]">
                <Svg className="w-[18px] h-[18px]">
                  <path d="M1 7h17v11H1z" fill="#1f7fd8" stroke="#123" />
                  <path d="M7 18h5v2h3v2H5v-2h2z" fill="#222" />
                  <path d="M13 12 L20 4 L23 2 L22 6 L15 14z" fill="#777" stroke="#333" />
                </Svg>
              </button>
            </div>
            <div>
              {channels.map((c, i) => (
                <ChannelRow
                  key={c.id}
                  channel={c}
                  value={rgb[i]}
                  onChange={(v) => setRgb(rgb.map((old, k) => (k === i ? v : old)))}
                />
              ))}
            </div>

            <div className="pt-1"><Heading>Textur</Heading></div>
            <div className="flex items-center h-5 mt-px">
              <input id="use-texture" type="checkbox" className={clsx('w-[10px] h-[10px] appearance-none', sunken)} />
              <label htmlFor="use-texture" className="ml-1">Texturabbildung verwenden</label>
            </div>
            <div className="flex items-center -mr-2">
              <input aria-label="Texturdatei" className={clsx('w-[135px] h-[17px] px-1', sunken)} />
              <button aria-label="Durchsuchen" className="ml-1"><OpenIcon className="w-[17px] h-[17px]" /></button>
              <button aria-label="Textur bearbeiten" className="ml-[5px]"><BoxGlyph muted /></button>
            </div>
            <div className="flex items-start mt-[6px] text-[#777]">
              <svg viewBox="0 0 12 16" className="w-3 h-4"><path d="M0 13l4-3v2h4v-2l4 3-4 3v-2H4v2z" fill="#777" /></svg>
              <input
                aria-label="Texturbreite"
                disabled
                value="28422,6m"
                readOnly
                className={clsx('ml-[6px] w-[46px] h-[17px] pl-1 text-[10px] bg-[#f0f0f0]!', sunken)}
              />
              <svg viewBox="0 0 20 16" className="ml-1 w-5 h-4" fill="none" stroke="#777" strokeWidth="1.500">
                <path d="M1 8c4 0 5 3 5 8M13 15c1-2 4-2 5 0" />
              </svg>
              <span className="flex-1" />
              <label className="flex items-center h-[18px] whitespace-nowrap -mr-3 w-[70px]">
                <input type="checkbox" disabled className={clsx('w-[10px] h-[10px] mr-1 appearance-none', sunken)} />
                Kolorieren
              </label>
            </div>
          </div>
        </div>

        {/* tray scrollbar */}
        <div className="w-[15px] shrink-0 flex flex-col items-center bg-[#f3f3f3]">
          <ChevronUp size={10} strokeWidth={3} className="my-[3px]" />
          <div className="w-[13px] h-[15px] bg-[#c9c9c9]" />
          <span className="flex-1" />
          <ChevronDown size={10} strokeWidth={3} className="my-[3px]" />
        </div>
      </div>
    </section>
  );
};

/* ---------- window ---------- */

const menus = ['Datei', 'Bearbeiten', 'Ansicht', 'Kamera', 'Zeichnen', 'Funktionen', 'Fenster', 'Erweiterungen', 'Hilfe'];

const TitleBar = () => (
  <header className="h-[26px] pl-2 flex items-center bg-white shrink-0">
    <Svg className="w-[14px] h-[14px]"><LogoShape /></Svg>
    <h1 className="ml-1 flex-1">Test.skp - SketchUp Make 2017</h1>
    <button aria-label="Minimieren" className="w-10 flex justify-center"><Minus size={12} strokeWidth={2} /></button>
    <button aria-label="Maximieren" className="w-10 flex justify-center">
      <Square size={12} strokeWidth={2} strokeLinejoin="miter" />
    </button>
    <button aria-label="Schließen" className="w-10 flex justify-center"><X size={14} strokeWidth={2} /></button>
  </header>
);

const StatusBar = () => (
  <footer className="h-[22px] pl-1 flex items-center shrink-0 bg-[#f1f1f1] border-t border-white text-[11px] font-['Open_Sans','Noto_Sans',sans-serif]">
    <button aria-label="Geo-Position" className="w-[14px]">
      <Svg className="w-[13px] h-[13px]">
        <circle cx="12" cy="12" r="10.500" stroke="#9b9b9b" strokeWidth="2" />
        <path d="M12 20 L8 10 A4 4 0 1 1 16 10 Z" fill="#9b9b9b" />
      </Svg>
    </button>
    <button aria-label="Mitwirkende" className="ml-3 w-[14px]">
      <Svg className="w-[13px] h-[13px]">
        <circle cx="12" cy="12" r="10.500" stroke="#111" strokeWidth="2.400" />
        <circle cx="12" cy="6.500" r="2" fill="#111" />
        <path d="M8.500 10h7v2H14v7h-4v-7H8.500z" fill="#111" />
      </Svg>
    </button>
    <button aria-label="Anmelden" className="ml-3 w-[14px]">
      <Svg className="w-[13px] h-[13px]">
        <circle cx="12" cy="12" r="11" fill="#e2e2e2" stroke="#9b9b9b" strokeWidth="2" />
        <circle cx="12" cy="9" r="4.500" fill="#8f8f8f" />
        <path d="M4 19 C5 13 19 13 20 19 C16 23 8 23 4 19 Z" fill="#8f8f8f" />
      </Svg>
    </button>
    <span className="ml-[10px] w-px h-3 bg-[#999]" />
    <p className="ml-2 flex-1 min-w-0 truncate">
      Wählen Sie den Punkt oder die Kante aus, ab der bzw. dem gemessen werden...
    </p>
    <span className="w-px h-3 bg-[#999]" />
    <label htmlFor="length" className="ml-2 w-[38px]">Länge</label>
    <input id="length" className="w-[175px] h-5 bg-white border border-[#c9d3da] px-1 outline-none" />
    <svg viewBox="0 0 8 8" className="ml-3 w-2 h-2 self-end" fill="#aaa">
      <path d="M6 0h2v2H6zM3 3h2v2H3zM6 3h2v2H6zM0 6h2v2H0zM3 6h2v2H3zM6 6h2v2H6z" />
    </svg>
  </footer>
);

const App = () => (
  <div className="h-screen flex flex-col overflow-hidden border border-[#6f6f6f] bg-[#f0f0f0] text-black text-[10px] leading-[14px] font-['Roboto','Open_Sans',sans-serif]">
    <TitleBar />
    <nav className="h-[18px] pl-[6px] flex items-center gap-[13px] bg-white shrink-0">
      {menus.map((m) => (
        <button key={m}>{m}</button>
      ))}
    </nav>
    <Toolbar tools={fileTools} />
    <Toolbar tools={editTools} />
    <div className="flex flex-1 min-h-0">
      <SidePalette />
      <Viewport />
      <Tray />
    </div>
    <StatusBar />
  </div>
);

export default App;
